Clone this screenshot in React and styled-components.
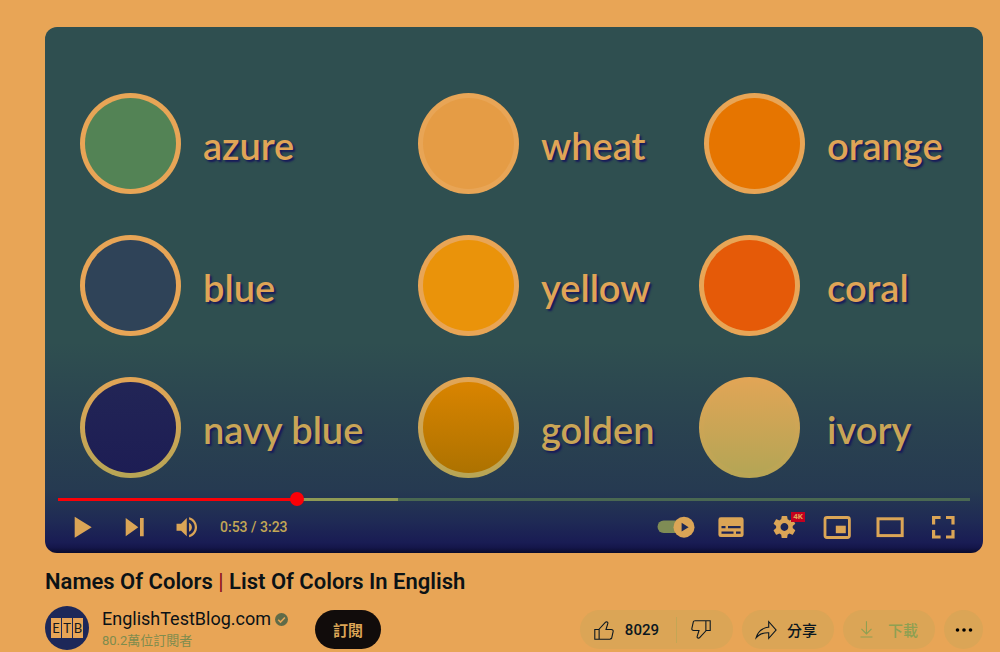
import React from "react";
import styled, { createGlobalStyle } from "styled-components";

const GlobalStyle = createGlobalStyle`
  * { box-sizing: border-box; }
  body {
    margin: 0;
    background: #e8a556;
    color: #0b1216;
    font-family: Roboto, "Noto Sans CJK TC", sans-serif;
  }
  button {
    border: 0;
    padding: 0;
    background: none;
    font: inherit;
    color: inherit;
    cursor: pointer;
  }
`;

const Page = styled.main`
  padding: 27px 17px 0 45px;
`;

const Player = styled.section`
  display: flex;
  flex-direction: column;
  border-radius: 12px;
  overflow: hidden;
  background: linear-gradient(
    #2f4f50 0%,
    #2f4f50 60%,
    #2a4350 75%,
    #263a51 88%,
    #1f2a55 94%,
    #191c54 98%,
    #14164a 99%,
    #0a0c2c 100%
  );
`;

const Slide = styled.div`
  display: grid;
  grid-template-columns: 123fr 215fr 123fr 158fr 128fr 156fr;
  grid-auto-rows: 101px;
  row-gap: 41px;
  align-items: center;
  padding: 66px 0 14px 35px;
`;

const Disc = styled.div`
  width: 101px;
  height: 101px;
  border-radius: 50%;
  border: 5px solid transparent;
  justify-self: start;
  margin-left: ${(p) => (p.$shift ? "5px" : "0")};
  background: linear-gradient(${(p) => p.$fill}) padding-box,
    linear-gradient(${(p) => p.$ring}) border-box;
`;

const ColorName = styled.span`
  padding-top: 2px;
  font-family: Lato, sans-serif;
  font-size: 38px;
  font-weight: 600;
  line-height: 48px;
  white-space: nowrap;
  color: ${(p) => p.$tone};
  text-shadow: 2px 2px 2px #17195a;
`;

const Track = styled.div`
  display: flex;
  align-items: center;
  height: 14px;
  margin: 0 13px;
`;

const Segment = styled.div`
  flex: ${(p) => p.$share} 0 0;
  height: 3px;
  background: ${(p) => p.$color};
`;

const Handle = styled.div`
  width: 14px;
  height: 14px;
  margin: 0 -7px;
  border-radius: 50%;
  background: #fb0007;
  z-index: 1;
`;

const Controls = styled.div`
  display: flex;
  align-items: center;
  height: 47px;
  padding: 0 14px 5px 13px;
  color: #dba556;
`;

const ControlButton = styled.button`
  position: relative;
  display: flex;
  align-items: center;
  justify-content: center;
  width: ${(p) => p.$width}px;
  height: 42px;

  svg { width: 48px; height: 48px; flex: none; fill: currentColor; }
`;

const Time = styled.span`
  flex: 1;
  padding-left: 6px;
  font-size: 14px;
  font-weight: 500;
  line-height: 20px;
  color: #c3a755;
`;

const Badge = styled.span`
  position: absolute;
  top: 6px;
  right: 5px;
  width: 14px;
  height: 10px;
  background: #c4001f;
  color: #e0a556;
  font-size: 8px;
  font-weight: 700;
  line-height: 10px;
  text-align: center;
`;

const Title = styled.h1`
  margin: 15px 0 10px;
  font-size: 22px;
  font-weight: 600;
  line-height: 28px;
`;

const Bar = styled.span`
  color: #8a0d20;
  font-weight: 400;
`;

const MetaRow = styled.div`
  display: flex;
  align-items: flex-start;
`;

const Avatar = styled.a`
  display: flex;
  align-items: center;
  justify-content: center;
  gap: 1px;
  width: 44px;
  height: 44px;
  border-radius: 50%;
  background: #1d2859;
  text-decoration: none;
`;

const Tile = styled.span`
  width: 10px;
  height: 20px;
  background: #e8a556;
  color: #14181f;
  font-family: Lato, sans-serif;
  font-size: 13px;
  line-height: 20px;
  text-align: center;
`;

const Owner = styled.div`
  width: 213px;
  margin-left: 13px;
`;

const OwnerName = styled.div`
  display: flex;
  align-items: center;
  gap: 4px;
  font-size: 18px;
  line-height: 26px;

  a { color: inherit; text-decoration: none; }
  svg { width: 13px; height: 13px; }
`;

const Subscribers = styled.div`
  font-size: 13px;
  line-height: 18px;
  color: #7e8c4e;
`;

const Subscribe = styled.button`
  width: 66px;
  height: 39px;
  margin-top: 4px;
  border-radius: 20px;
  background: #110c0b;
  color: #dba556;
  font-size: 15px;
  font-weight: 700;
`;

const Actions = styled.div`
  display: flex;
  gap: 9px;
  margin: 4px 0 0 auto;
`;

const Pill = styled.div`
  display: flex;
  align-items: center;
  height: 39px;
  border-radius: 20px;
  background: #dba556;
`;

const ActionButton = styled.button`
  display: flex;
  align-items: center;
  gap: 8px;
  height: 39px;
  padding: 0 17px 0 11px;
  font-size: 15px;
  font-weight: 500;
  color: ${(p) => (p.$muted ? "#8ea052" : "#0b1720")};

  svg { width: 26px; height: 26px; fill: currentColor; }
`;

const DislikeButton = styled(ActionButton)`
  padding-right: 19px;
`;

const Divider = styled.span`
  width: 1px;
  height: 26px;
  background: #c4a655;
`;

const MoreButton = styled.button`
  display: flex;
  align-items: center;
  justify-content: center;
  width: 39px;
  height: 39px;
`;

const RING = "#e8a556, #e8a556";
const LOW_RING = "#e2a556, #b7a555";

const COLORS = [
  { name: "azure", fill: "#538355, #538355" },
  { name: "wheat", fill: "#e59c45, #e59c45" },
  { name: "orange", fill: "#e67500, #e67500", shift: true },
  { name: "blue", fill: "#2f4358, #2f4358" },
  { name: "yellow", fill: "#ea930a, #ea930a" },
  { name: "coral", fill: "#e55a08, #e55a08" },
  { name: "navy blue", fill: "#222556, #1d1d54", low: true },
  { name: "golden", fill: "#d98400, #ad7200", low: true },
  { name: "ivory", fill: "#dfa556, #b5a555", low: true },
];

const GEAR =
  "m 23.94,18.78 c .03,-0.25 .05,-0.51 .05,-0.78 0,-0.27 -0.02,-0.52 -0.05,-0.78 l 1.68,-1.32 c .15,-0.12 .19,-0.33 .09,-0.51 l -1.6,-2.76 c -0.09,-0.17 -0.31,-0.24 -0.48,-0.17 l -1.99,.8 c -0.41,-0.32 -0.86,-0.58 -1.35,-0.78 l -0.30,-2.12 c -0.02,-0.19 -0.19,-0.33 -0.39,-0.33 l -3.2,0 c -0.2,0 -0.36,.14 -0.39,.33 l -0.30,2.12 c -0.48,.2 -0.93,.47 -1.35,.78 l -1.99,-0.8 c -0.18,-0.07 -0.39,0 -0.48,.17 l -1.6,2.76 c -0.10,.17 -0.05,.39 .09,.51 l 1.68,1.32 c -0.03,.25 -0.05,.52 -0.05,.78 0,.26 .02,.52 .05,.78 l -1.68,1.32 c -0.15,.12 -0.19,.33 -0.09,.51 l 1.6,2.76 c .09,.17 .31,.24 .48,.17 l 1.99,-0.8 c .41,.32 .86,.58 1.35,.78 l .30,2.12 c .02,.19 .19,.33 .39,.33 l 3.2,0 c .2,0 .36,-0.14 .39,-0.33 l .30,-2.12 c .48,-0.2 .93,-0.47 1.35,-0.78 l 1.99,.8 c .18,.07 .39,0 .48,-0.17 l 1.6,-2.76 c .09,-0.17 .05,-0.39 -0.09,-0.51 l -1.68,-1.32 0,0 z m -5.94,2.01 c -1.54,0 -2.8,-1.25 -2.8,-2.8 0,-1.54 1.25,-2.8 2.8,-2.8 1.54,0 2.8,1.25 2.8,2.8 0,1.54 -1.25,2.8 -2.8,2.8 l 0,0 z";

const THUMB =
  "M18.77,11h-4.23l1.52-4.94C16.38,5.03,15.54,4,14.38,4c-0.58,0-1.14,0.24-1.52,0.65L7,11H3v10h4h1h9.43c1.06,0,1.98-0.67,2.19-1.61l1.34-6C21.23,12.15,20.18,11,18.77,11z M7,20H4v-8h3V20z M19.98,13.17l-1.34,6C18.54,19.65,18.03,20,17.43,20H8v-8.61l5.6-6.06C13.79,5.12,14.08,5,14.38,5c0.26,0,0.5,0.11,0.63,0.3c0.07,0.1,0.15,0.26,0.09,0.47l-1.52,4.94L13.18,12h1.35h4.23c0.41,0,0.8,0.17,1.03,0.46C19.92,12.61,20.05,12.86,19.98,13.17z";

function Control({ label, width = 53, children, badge }) {
  return (
    <ControlButton type="button" aria-label={label} $width={width}>
      <svg viewBox="0 0 48 48" aria-hidden="true">{children}</svg>
      {badge && <Badge>{badge}</Badge>}
    </ControlButton>
  );
}

export default function App() {
  return (
    <>
      <GlobalStyle />
      <Page>
        <Player>
          <Slide>
            {COLORS.map((c) => (
              <React.Fragment key={c.name}>
                <Disc $fill={c.fill} $ring={c.low ? LOW_RING : RING} $shift={c.shift} />
                <ColorName $tone={c.low ? "#c9a556" : "#e0a556"}>{c.name}</ColorName>
              </React.Fragment>
            ))}
          </Slide>
          <Track>
            <Segment $share={239} $color="#fb0007" />
            <Handle />
            <Segment $share={101} $color="#8f9a55" />
            <Segment $share={571} $color="#4a6852" />
          </Track>
          <Controls>
            <Control label="Play" width={52}>
              <path d="M14.7 13.7v21l17-10.5z" />
            </Control>
            <Control label="Next" width={52}>
              <path d="M13.7 15v18.3l12.6-9.1zM28 15h3.7v18.3H28z" />
            </Control>
            <Control label="Mute" width={52}>
              <path
                transform="translate(3.4 3.7) scale(1.14)"
                d="M8,21 L12,21 L17,26 L17,10 L12,15 L8,15 Z M19,14 L19,22 C20.48,21.32 21.5,19.77 21.5,18 C21.5,16.26 20.48,14.74 19,14 Z M19,11.29 C21.89,12.15 24,14.83 24,18 C24,21.17 21.89,23.85 19,24.71 L19,26.77 C23.01,25.86 26,22.28 26,18 C26,13.72 23.01,10.14 19,9.23 Z"
              />
            </Control>
            <Time>0:53 / 3:23</Time>
            <Control label="Autoplay" width={56}>
              <rect x="5.5" y="17.5" width="30" height="12.5" rx="6.2" fill="#7f8c55" />
              <circle cx="32" cy="24.2" r="10.5" />
              <path d="M29.6 19.8v8.8l7-4.4z" fill="#1e2a55" />
            </Control>
            <Control label="Subtitles">
              <path
                fillRule="evenodd"
                d="M13.8 14.3h20.4a2.4 2.4 0 0 1 2.4 2.4v15a2.4 2.4 0 0 1-2.4 2.4H13.8a2.4 2.4 0 0 1-2.4-2.4v-15a2.4 2.4 0 0 1 2.4-2.4zM14.5 23v2.2h4V23zM21 23v2.2h12.6V23zM14.5 28.6v2.2h12v-2.2zM29 28.6v2.2h4.6v-2.2z"
              />
            </Control>
            <Control label="Settings" badge="4K">
              <path transform="translate(-0.6 -1) scale(1.39)" d={GEAR} />
            </Control>
            <Control label="Miniplayer">
              <rect x="12" y="14.5" width="24.4" height="20" rx="2" fill="none" stroke="currentColor" strokeWidth="2.8" />
              <rect x="22.8" y="22.7" width="10" height="7.5" />
            </Control>
            <Control label="Theater mode">
              <rect x="12" y="15.8" width="24.2" height="16.8" fill="none" stroke="currentColor" strokeWidth="3" />
            </Control>
            <Control label="Full screen">
              <path
                d="M14.6 21.5v-7h7M27 14.5h7v7M34 27v7h-7M21.6 34h-7v-7"
                fill="none"
                stroke="currentColor"
                strokeWidth="3.2"
              />
            </Control>
          </Controls>
        </Player>

        <Title>
          Names Of Colors <Bar>|</Bar> List Of Colors In English
        </Title>
        <MetaRow>
          <Avatar href="#channel" aria-label="EnglishTestBlog.com">
            <Tile>E</Tile>
            <Tile>T</Tile>
            <Tile>B</Tile>
          </Avatar>
          <Owner>
            <OwnerName>
              <a href="#channel">EnglishTestBlog.com</a>
              <svg viewBox="0 0 13 13" aria-hidden="true">
                <circle cx="6.5" cy="6.5" r="6.5" fill="#5f6b48" />
                <path d="M3.2 6.8l2.3 2.3 4.4-4.7" fill="none" stroke="#e8a556" strokeWidth="1.5" />
              </svg>
            </OwnerName>
            <Subscribers>80.2萬位訂閱者</Subscribers>
          </Owner>
          <Subscribe type="button">訂閱</Subscribe>
          <Actions>
            <Pill>
              <ActionButton type="button">
                <svg viewBox="0 0 24 24" aria-hidden="true"><path d={THUMB} /></svg>
                8029
              </ActionButton>
              <Divider />
              <DislikeButton type="button" aria-label="Dislike">
                <svg viewBox="0 0 24 24" aria-hidden="true">
                  <path transform="rotate(180 12 12)" d={THUMB} />
                </svg>
              </DislikeButton>
            </Pill>
            <Pill>
              <ActionButton type="button">
                <svg viewBox="0 0 24 24" aria-hidden="true">
                  <path d="M15,5.63L20.66,12L15,18.37V15v-1h-1c-3.96,0-7.14,1-9.75,3.09c1.84-4.07,5.11-6.4,9.89-7.1L15,9.86V9V5.63 M14,3v6 C6.22,10.13,3.11,15.33,2,21c2.78-3.97,6.44-6,12-6v6l8-9L14,3L14,3z" />
                </svg>
                分享
              </ActionButton>
            </Pill>
            <Pill>
              <ActionButton type="button" $muted>
                <svg viewBox="0 0 24 24" aria-hidden="true">
                  <path d="M17,18v1H6v-1H17z M16.5,11.4l-0.7-0.7L12,14.4V4h-1v10.4l-3.8-3.8l-0.7,0.7l5,5L16.5,11.4z" />
                </svg>
                下載
              </ActionButton>
            </Pill>
            <Pill>
              <MoreButton type="button" aria-label="More actions">
                <svg width="20" height="6" viewBox="0 0 20 6" aria-hidden="true">
                  <circle cx="3.5" cy="3" r="1.8" />
                  <circle cx="10" cy="3" r="1.8" />
                  <circle cx="16.5" cy="3" r="1.8" />
                </svg>
              </MoreButton>
            </Pill>
          </Actions>
        </MetaRow>
      </Page>
    </>
  );
}
